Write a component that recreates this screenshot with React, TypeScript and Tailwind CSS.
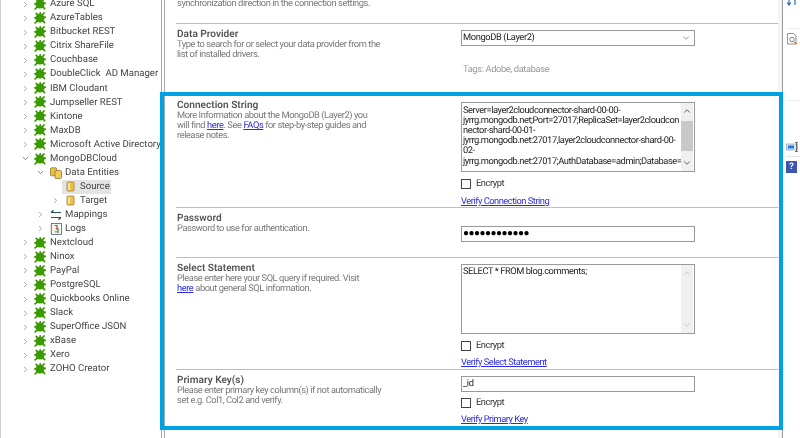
import React from "react";
import { ChevronRight, ChevronDown, ChevronUp } from "lucide-react";

const FONT = "font-['Roboto','Noto_Sans',sans-serif] [text-rendering:geometricPrecision]";

function Bug() {
  return (
    <svg viewBox="0 0 12 12" className="w-3 h-3 shrink-0">
      <g stroke="#3a9a00" strokeWidth="1.8" strokeLinecap="round">
        <path d="M2.2 1.4 L4.4 3.6" />
        <path d="M10 1 L7.8 3.4" />
        <path d="M0.9 5.8 H3" />
        <path d="M11.2 5.2 H9" />
        <path d="M1.2 10.8 L3.6 8.6" />
        <path d="M10.6 10.6 L8.4 8.4" />
        <path d="M6.2 1 V3" />
      </g>
      <ellipse cx="6" cy="6.2" rx="4.5" ry="4.4" fill="#3a9a00" />
    </svg>
  );
}

function Cylinder() {
  return (
    <svg viewBox="0 0 9 11" className="w-[9px] h-[11px] shrink-0">
      <rect x="1" y="1" width="7" height="9" rx="1" fill="#f0c040" stroke="#9a8040" strokeWidth="0.8" />
      <rect x="2" y="2" width="2" height="7" fill="#fbe49a" />
    </svg>
  );
}

function Cylinders() {
  return (
    <svg viewBox="0 0 12 12" className="w-3 h-3 shrink-0">
      <rect x="0.5" y="0.8" width="6" height="8" rx="1" fill="#f0c040" stroke="#8a7440" strokeWidth="0.8" />
      <rect x="5" y="3.5" width="6.5" height="8" rx="1" fill="#f4cc55" stroke="#8a7440" strokeWidth="0.8" />
    </svg>
  );
}

function MapIcon() {
  return (
    <svg viewBox="0 0 12 12" className="w-3 h-3 shrink-0" fill="none" stroke="#27486f" strokeWidth="1.2">
      <path d="M1 3.5 H11 M3.5 1.2 L1 3.5" />
      <path d="M1 8.5 H11 M8.5 10.8 L11 8.5" />
    </svg>
  );
}

function LogIcon() {
  return (
    <svg viewBox="0 0 12 12" className="w-3 h-3 shrink-0">
      <rect x="1.5" y="0.5" width="10" height="11" fill="#f4f6f8" stroke="#47627f" strokeWidth="0.8" />
      <path d="M1 1.5 V11" stroke="#c9a23a" strokeWidth="1.2" strokeDasharray="1 1" />
      <path d="M4.5 2.5 H7 V5 L6 6.5" stroke="#d43c2c" strokeWidth="1.2" fill="none" />
      <path d="M8 5 V10" stroke="#3f9e30" strokeWidth="1.4" />
      <rect x="5.3" y="8" width="1.3" height="1.5" fill="#d43c2c" />
    </svg>
  );
}

function Row({ label }: { label: string }) {
  return (
    <div className="h-[14.06px] flex items-center pl-[21px] text-[#444]">
      <ChevronRight className="w-[9px] h-[9px] shrink-0 text-[#888]" strokeWidth={2} />
      <span className="ml-[4px] flex"><Bug /></span>
      <span className="ml-[4px] whitespace-pre">{label}</span>
    </div>
  );
}

const before = ["Azure SQL", "AzureTables", "Bitbucket REST", "Citrix ShareFile", "Couchbase", "DoubleClick  AD Manager", "IBM Cloudant", "Jumpseller REST", "Kintone", "MaxDB", "Microsoft Active Directory"];
const after = ["Nextcloud", "Ninox", "PayPal", "PostgreSQL", "Quickbooks Online", "Slack", "SuperOffice JSON", "xBase", "Xero", "ZOHO Creator"];

function Tree() {
  return (
    <div className="w-[161px] shrink-0 overflow-hidden border-l border-[#c8d0d8] text-[9.6px] leading-none">
      <div className="-mt-[3px] -ml-px">
        {before.map((l) => <Row key={l} label={l} />)}
        <div className="h-[14.06px] flex items-center pl-[21px] text-[#444]">
          <ChevronDown className="w-[9px] h-[9px] shrink-0 text-[#555]" strokeWidth={2} />
          <span className="ml-[4px] flex"><Bug /></span>
          <span className="ml-[4px]">MongoDBCloud</span>
        </div>
        <div className="h-[14.06px] flex items-center pl-[36px] text-[#444]">
          <ChevronDown className="w-[9px] h-[9px] shrink-0 text-[#555]" strokeWidth={2} />
          <span className="ml-[5px] flex"><Cylinders /></span>
          <span className="ml-[3px]">Data Entities</span>
        </div>
        <div className="h-[14.06px] flex items-center pl-[62px] text-[#444]">
          <div className="w-[49px] h-full flex items-center bg-[#e4e4e4] pl-[4px]">
            <Cylinder />
            <span className="ml-[5px]">Source</span>
          </div>
        </div>
        <div className="h-[14.06px] flex items-center pl-[51px] text-[#444]">
          <ChevronRight className="w-[9px] h-[9px] shrink-0 text-[#888]" strokeWidth={2} />
          <span className="ml-[6px] flex"><Cylinder /></span>
          <span className="ml-[5px]">Target</span>
        </div>
        <div className="h-[14.06px] flex items-center pl-[36px] text-[#444]">
          <ChevronRight className="w-[9px] h-[9px] shrink-0 text-[#888]" strokeWidth={2} />
          <span className="ml-[5px] flex"><MapIcon /></span>
          <span className="ml-[3px]">Mappings</span>
        </div>
        <div className="h-[14.06px] flex items-center pl-[36px] text-[#444]">
          <ChevronRight className="w-[9px] h-[9px] shrink-0 text-[#888]" strokeWidth={2} />
          <span className="ml-[5px] flex"><LogIcon /></span>
          <span className="ml-[3px]">Logs</span>
        </div>
        {after.map((l) => <Row key={l} label={l} />)}
      </div>
    </div>
  );
}

function Check() {
  return (
    <div className="flex items-center h-[12px] text-[9.3px] text-[#333] leading-none">
      <span className="w-[10px] h-[10px] border border-[#444] bg-white" />
      <span className="ml-[5px] tracking-[-0.42px]">Encrypt</span>
    </div>
  );
}

function VLink({ children, className }: { children: React.ReactNode; className: string }) {
  return <a className={`block text-[#2a2ae0] underline text-[9.3px] leading-[10px] tracking-[-0.48px] ${className}`}>{children}</a>;
}

function Section({ title, className, desc, children }: { title: string; className: string; desc: React.ReactNode; children?: React.ReactNode }) {
  return (
    <div className={`flex border-t-[1.5px] border-[#bdbdbd] ${className}`}>
      <div className="w-[285px] shrink-0 pl-px pt-[1px]">
        <div className="text-[10.1px] leading-[10px] font-semibold text-[#555] pt-[0.5px]">{title}</div>
        <div className="text-[9.3px] leading-[10px] text-[#787878] tracking-[-0.42px]">{desc}</div>
      </div>
      <div className="w-[234px] shrink-0 flex flex-col items-start">{children}</div>
    </div>
  );
}

function H({ children }: { children: React.ReactNode }) {
  return <a className="text-[#2a2ae0] underline">{children}</a>;
}

function TextBox({ children, className }: { children?: React.ReactNode; className: string }) {
  return (
    <div className={`w-[234px] border-[1.5px] border-[#9a9a9a] bg-white flex items-center pl-[1px] text-[9.3px] leading-none text-[#222] shrink-0 tracking-[-0.37px] ${className}`}>
      {children}
    </div>
  );
}

function Scroll({ active }: { active?: boolean }) {
  return (
    <div className="w-[12px] h-full bg-[#f0f0f0] flex flex-col items-center justify-between shrink-0 mr-[1px]">
      <ChevronUp className={`w-[10px] h-[10px] mt-[3px] ${active ? "text-[#444]" : "text-[#bbb]"}`} strokeWidth={2} />
      {active && <div className="w-full h-[30px] bg-[#c8c8c8] -mt-[3px]" />}
      <ChevronDown className={`w-[10px] h-[10px] mb-[3px] ${active ? "text-[#444]" : "text-[#bbb]"}`} strokeWidth={2} />
    </div>
  );
}

function Main() {
  return (
    <div className="flex-1 min-w-0 pl-[11px] overflow-hidden">
      <div className="h-[24.5px] text-[9.3px] leading-[10px] text-[#787878] pl-px -mt-[1.5px] tracking-[-0.42px]">synchronization direction in the connection settings.</div>
      <Section title="Data Provider" className="h-[69px] pt-[4px]" desc={<>Type to search for or select your data provider from the<br />list of installed drivers.</>}>
        <TextBox className="h-[16px] mt-[1.5px] justify-between pr-[3px]">
          <span>MongoDB (Layer2)</span>
          <ChevronDown className="w-[10px] h-[10px] text-[#555]" strokeWidth={1.5} />
        </TextBox>
        <div className="mt-[19px] ml-[2px] text-[9.3px] text-[#999] leading-none tracking-[-0.37px]">Tags: Adobe, database</div>
      </Section>
      <Section title="Connection String" className="h-[115px] pt-[7.5px] !border-t-0" desc={<>More Information about the MongoDB (Layer2) you<br />will find <H>here</H>. See <H>FAQs</H> for step-by-step guides and<br />release notes.</>}>
        <div className="w-[234px] h-[70px] border-[1.5px] border-[#9a9a9a] flex bg-white mt-[2.5px] shrink-0 overflow-hidden">
          <div className="flex-1 min-w-0 pl-[1px] pt-[2.5px] text-[9.3px] leading-[10.2px] text-[#222] whitespace-pre overflow-hidden tracking-[-0.45px]">
            {"Server=layer2cloudconnector-shard-00-00-\njyrrg.mongodb.net;Port=27017;ReplicaSet=layer2cloudcon\nnector-shard-00-01-\njyrrg.mongodb.net:27017,layer2cloudconnector-shard-00-\n02-\njyrrg.mongodb.net:27017;AuthDatabase=admin;Database="}
          </div>
          <Scroll active />
        </div>
        <div className="mt-[6px]"><Check /></div>
        <VLink className="mt-[7px]">Verify Connection String</VLink>
      </Section>
      <Section title="Password" className="h-[50px] pt-[4px]" desc="Password to use for authentication.">
        <TextBox className="h-[16px] mt-[13.5px]">
          <span className="text-[10px] leading-none tracking-[-0.55px] text-black pt-[1px]">●●●●●●●●●●●●</span>
        </TextBox>
      </Section>
      <Section title="Select Statement" className="h-[112px] pt-[4px]" desc={<>Please enter here your SQL query if required. Visit<br /><H>here</H> about general SQL information.</>}>
        <div className="w-[234px] h-[70px] border-[1.5px] border-[#9a9a9a] flex bg-white mt-[1.5px] shrink-0">
          <div className="flex-1 min-w-0 pl-[1px] pt-[2.5px] text-[9.3px] leading-[10.2px] text-[#222] whitespace-pre tracking-[-0.42px]">SELECT * FROM blog.comments;</div>
          <Scroll />
        </div>
        <div className="mt-[6.5px]"><Check /></div>
        <VLink className="mt-[6px]">Verify Select Statement</VLink>
      </Section>
      <Section title="Primary Key(s)" className="h-[60px] pt-[4px]" desc={<>Please enter primary key column(s) if not automatically<br />set e.g. Col1, Col2 and verify.</>}>
        <TextBox className="h-[16px] mt-[1.5px] pt-[1px]">_id</TextBox>
        <div className="mt-[5.5px]"><Check /></div>
        <VLink className="mt-[6px]">Verify Primary Key</VLink>
      </Section>
    </div>
  );
}

function Side() {
  return (
    <div className="w-[18px] shrink-0 border-l-[1.5px] border-[#999] flex flex-col items-start pl-[3px] relative">
      <svg viewBox="0 0 12 6" className="w-3 h-[6px]" fill="none" stroke="#2a6fb5" strokeWidth="1.2"><path d="M3 0 V4 M1 2.5 L3 5 L5 2.5 M9 0 V5" /></svg>
      <div className="w-[14px] border-t border-[#eee] mt-[22px]" />
      <svg viewBox="0 0 12 12" className="w-3 h-3 mt-[4px]">
        <path d="M1.5 .5 H7.5 L10 3 V11 H1.5 Z" fill="#fff" stroke="#777" strokeWidth="0.8" />
        <circle cx="6" cy="6.5" r="2.2" fill="none" stroke="#6c8aa8" strokeWidth="1" />
        <path d="M8 9 L11 11" stroke="#d08020" strokeWidth="1.3" />
      </svg>
      <div className="w-[14px] border-t border-[#eee] mt-[55px]" />
      <svg viewBox="0 0 13 10" className="w-[13px] h-[10px] mt-[41px]">
        <rect x="0.5" y="2" width="11" height="6" fill="#dbe6f2" stroke="#8aa0b8" strokeWidth="0.7" />
        <rect x="2" y="3.5" width="6" height="3" fill="#1f7be0" />
        <path d="M9 .5 H12 M10.5 .5 V9.5 M9 9.5 H12" stroke="#555" strokeWidth="0.8" fill="none" />
      </svg>
      <div className="w-[14px] border-t border-[#e4e4e4] mt-[4px]" />
      <div className="w-[11px] h-[12px] mt-[4px] bg-[#3d55b0] text-white text-[9px] font-bold leading-[12px] text-center">?</div>
    </div>
  );
}

export default function App() {
  return (
    <div className={`relative w-[800px] h-[438px] overflow-hidden bg-white flex blur-[0.3px] ${FONT}`}>
      <Tree />
      <div className="w-[4px] shrink-0 border-l-[1.5px] border-r-[1.5px] border-[#a8a8a8]" />
      <Main />
      <div className="w-[4px] shrink-0 bg-[#f4f4f4]" />
      <Side />
      <div className="absolute left-[160px] top-[92px] w-[623px] h-[338px] border-[4.5px] border-[#00a2e3] pointer-events-none" />
    </div>
  );
}
